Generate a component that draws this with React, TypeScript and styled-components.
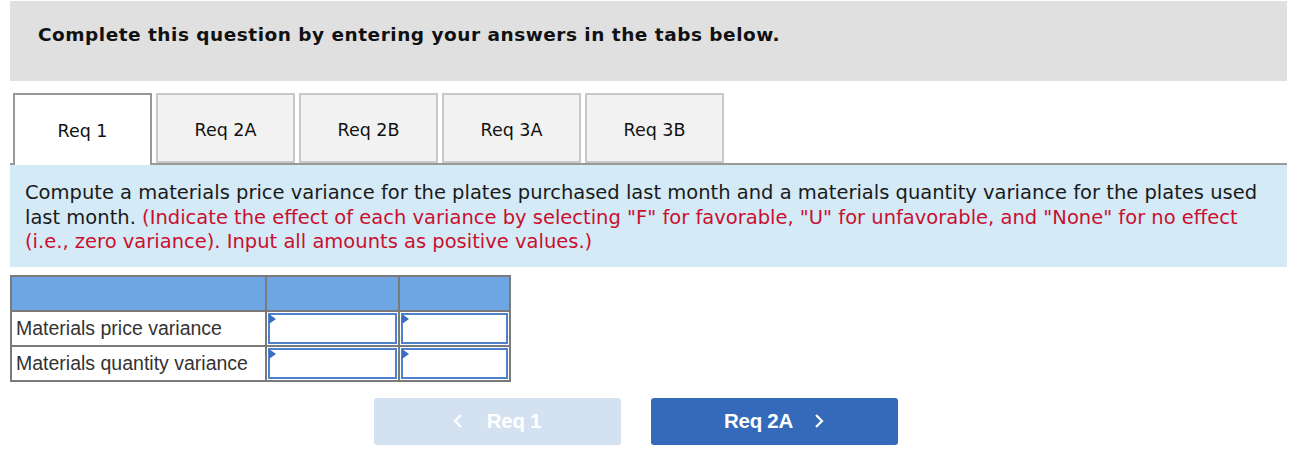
import React from "react";
import styled, { createGlobalStyle } from "styled-components";

const GlobalStyle = createGlobalStyle`
  html, body {
    margin: 0;
    padding: 0;
    background: #fff;
  }
`;

const Page = styled.div`
  width: 1277px;
  margin-left: 10px;
  padding-top: 1px;
  font-family: Verdana, "DejaVu Sans", sans-serif;
`;

const Header = styled.div`
  background: #e0e0e0;
  height: 80px;
  padding: 23px 0 0 28px;
  box-sizing: border-box;
  font-size: 18.5px;
  letter-spacing: 0.5px;
  font-weight: 700;
  color: #111;
`;

const TabBar = styled.div`
  display: flex;
  gap: 4px;
  margin-top: 12px;
  padding-left: 3px;
  border-bottom: 2px solid #999;
  height: 70px;
`;

const Tab = styled.div<{ $active?: boolean }>`
  width: 139px;
  height: ${(p) => (p.$active ? "72px" : "70px")};
  box-sizing: border-box;
  display: flex;
  align-items: center;
  justify-content: center;
  padding-top: 3px;
  padding-bottom: ${(p) => (p.$active ? "2px" : "0")};
  font-size: 17.5px;
  color: #111;
  background: ${(p) => (p.$active ? "#fff" : "#f2f2f2")};
  border: 2px solid ${(p) => (p.$active ? "#999" : "#c8c8c8")};
  border-bottom: ${(p) => (p.$active ? "none" : "2px solid #c8c8c8")};
  position: relative;
  z-index: ${(p) => (p.$active ? 1 : 0)};
`;

const Instructions = styled.div`
  background: #d5eaf7;
  padding: 16px 15px 12px 15px;
  font-size: 19.5px;
  line-height: 24.5px;
  color: #1a1a1a;
`;

const Red = styled.span`
  color: #c8102e;
`;

const Grid = styled.table`
  margin-top: 8px;
  border-collapse: collapse;
  table-layout: fixed;
  border: 2px solid #7a7a7a;
  font-family: "Liberation Sans", Arial, sans-serif;
`;

const HeadCell = styled.th<{ $w: number }>`
  width: ${(p) => p.$w}px;
  height: 33px;
  padding: 0;
  background: #6ea5e3;
  border: 2px solid #7a7a7a;
`;

const LabelCell = styled.td`
  height: 33px;
  padding: 0 4px;
  border: 2px solid #7a7a7a;
  font-size: 19.5px;
  color: #333;
  white-space: nowrap;
`;

const InputCell = styled.td`
  padding: 1px;
  border: 2px solid #7a7a7a;
`;

const InputBox = styled.div`
  position: relative;
  height: 31px;
  box-sizing: border-box;
  border: 2px solid #4f82cc;
  background: #fff;
`;

const Flag = styled.span`
  position: absolute;
  left: -1px;
  top: -1px;
  width: 0;
  height: 0;
  border-top: 5px solid transparent;
  border-bottom: 5px solid transparent;
  border-left: 7px solid #3a6fc0;
`;

const NavRow = styled.div`
  display: flex;
  justify-content: center;
  gap: 30px;
  margin-top: 16px;
  padding-right: 26px;
`;

const NavButton = styled.div<{ $disabled?: boolean }>`
  width: 247px;
  height: 47px;
  border-radius: 3px;
  display: flex;
  align-items: center;
  justify-content: center;
  gap: ${(p) => (p.$disabled ? "24px" : "21px")};
  font-family: "Liberation Sans", Arial, sans-serif;
  font-weight: 700;
  font-size: 20.5px;
  letter-spacing: -0.3px;
  color: #fff;
  background: ${(p) => (p.$disabled ? "#d4e1f1" : "#346ab9")};
`;

const Chevron = ({ dir }: { dir: "left" | "right" }) => (
  <svg width="10" height="16" viewBox="0 0 10 16">
    <path
      d={dir === "left" ? "M8 2 L2 8 L8 14" : "M2 2 L8 8 L2 14"}
      fill="none"
      stroke="#fff"
      strokeWidth="2.2"
    />
  </svg>
);

const tabs = ["Req 1", "Req 2A", "Req 2B", "Req 3A", "Req 3B"];
const rows = ["Materials price variance", "Materials quantity variance"];

export default function App() {
  return (
    <>
      <GlobalStyle />
      <Page>
        <Header>Complete this question by entering your answers in the tabs below.</Header>
        <TabBar>
          {tabs.map((t, i) => (
            <Tab key={t} $active={i === 0}>
              {t}
            </Tab>
          ))}
        </TabBar>
        <Instructions>
          Compute a materials price variance for the plates purchased last month and a materials
          quantity variance for the plates used last month.{" "}
          <Red>
            (Indicate the effect of each variance by selecting "F" for favorable, "U" for
            unfavorable, and "None" for no effect (i.e., zero variance). Input all amounts as
            positive values.)
          </Red>
        </Instructions>
        <Grid>
          <thead>
            <tr>
              <HeadCell $w={253} />
              <HeadCell $w={131} />
              <HeadCell $w={109} />
            </tr>
          </thead>
          <tbody>
            {rows.map((r) => (
              <tr key={r}>
                <LabelCell>{r}</LabelCell>
                <InputCell>
                  <InputBox>
                    <Flag />
                  </InputBox>
                </InputCell>
                <InputCell>
                  <InputBox>
                    <Flag />
                  </InputBox>
                </InputCell>
              </tr>
            ))}
          </tbody>
        </Grid>
        <NavRow>
          <NavButton $disabled>
            <Chevron dir="left" />
            <span>Req 1</span>
          </NavButton>
          <NavButton>
            <span>Req 2A</span>
            <Chevron dir="right" />
          </NavButton>
        </NavRow>
      </Page>
    </>
  );
}
